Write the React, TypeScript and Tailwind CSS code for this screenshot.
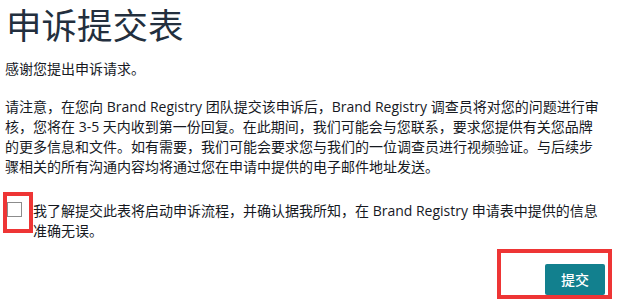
import React from "react";

export default function App() {
  return (
    <div
      className="relative w-[622px] h-[302px] bg-white pl-[5px] pr-[17px] text-[#16191f] overflow-hidden"
      style={{ fontFamily: '"Open Sans", "Noto Sans CJK SC", sans-serif' }}
    >
      <h1 className="text-[35.5px] leading-[51px] font-normal text-[#232f3e] ml-[1px]">申诉提交表</h1>
      <p className="mt-[8px] text-[14px] leading-[20px]">感谢您提出申诉请求。</p>
      <p className="mt-[18px] text-[14px] leading-[20px]">
        请注意，在您向 Brand Registry 团队提交该申诉后，Brand Registry 调查员将对您的问题进行审核，您将在 3-5 天内收到第一份回复。在此期间，我们可能会与您联系，要求您提供有关您品牌的更多信息和文件。如有需要，我们可能会要求您与我们的一位调查员进行视频验证。与后续步骤相关的所有沟通内容均将通过您在申请中提供的电子邮件地址发送。
      </p>
      <label className="mt-[24px] flex items-start">
        <span className="mt-[1px] ml-[2px] w-[15px] h-[15px] shrink-0 border border-[#8c8c8c] bg-white"></span>
        <span className="ml-[11px] text-[14px] leading-[20px]">
          我了解提交此表将启动申诉流程，并确认据我所知，在 Brand Registry 申请表中提供的信息准确无误。
        </span>
      </label>
      <div className="mt-[23px] flex justify-end">
        <button className="w-[60px] h-[31px] rounded-[2px] bg-[#12808e] text-white text-[14px] font-medium">
          提交
        </button>
      </div>
      <div className="absolute left-[3px] top-[192px] w-[30px] h-[41px] border-[4px] border-[#ee3535] pointer-events-none"></div>
      <div className="absolute left-[497px] top-[249px] w-[115px] h-[50px] border-[4px] border-[#ee3535] pointer-events-none"></div>
    </div>
  );
}
